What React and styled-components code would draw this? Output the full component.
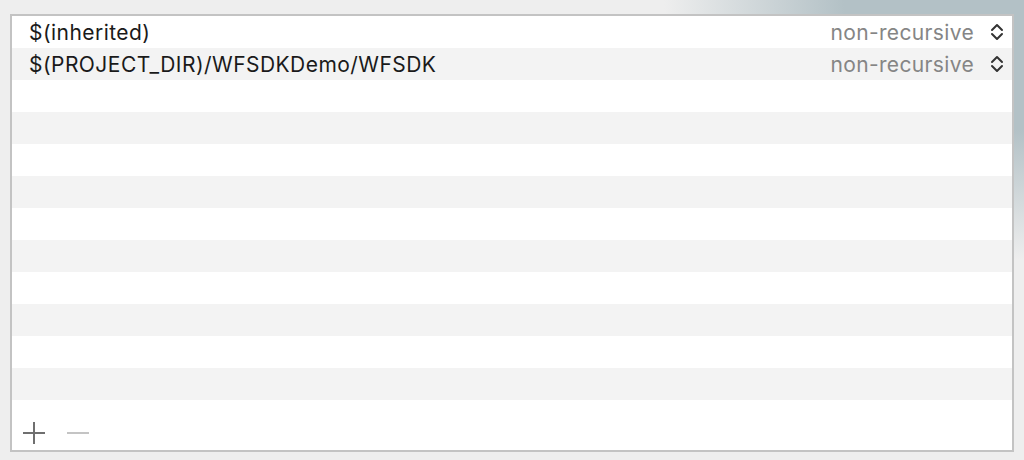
import React from 'react'
import styled, { createGlobalStyle } from 'styled-components'

const GlobalStyle = createGlobalStyle`
html, body {
  margin: 0;
  padding: 0;
}
body {
  width: 1024px;
  height: 460px;
  overflow: hidden;
  font-family: Inter, "Helvetica Neue", "Liberation Sans", sans-serif;
  background: radial-gradient(ellipse 360px 260px at 100% 0, #b3c1c6 50%, #eeeeee 100%);
  background-color: #eeeeee;
}
`

const paths = [
  { path: '$(inherited)', mode: 'non-recursive' },
  { path: '$(PROJECT_DIR)/WFSDKDemo/WFSDK', mode: 'non-recursive' },
]

function Chevrons() {
  return (
    <svg width="14" height="18" viewBox="0 0 14 18">
      <path d="M2 7 L7 2 L12 7" fill="none" stroke="#333" strokeWidth="2" strokeLinecap="round" strokeLinejoin="round" />
      <path d="M2 11 L7 16 L12 11" fill="none" stroke="#333" strokeWidth="2" strokeLinecap="round" strokeLinejoin="round" />
    </svg>
  )
}

function App() {
  const rows = []
  for (let i = 0; i < 12; i++) {
    const item = paths[i]
    rows.push(
      <Row key={i} odd={i % 2 === 1}>
        {item && (
          <>
            <PathText>{item.path}</PathText>
            <Mode>
              {item.mode}
              <Chevrons />
            </Mode>
          </>
        )}
      </Row>
    )
  }

  return (
    <>
      <GlobalStyle />
      <Page>
        <Table>
          <Rows>{rows}</Rows>
          <Footer>
            <IconButton aria-label="add">
              <svg width="22" height="22" viewBox="0 0 22 22">
                <rect x="0" y="10" width="22" height="2" fill="#6f6f6f" />
                <rect x="10" y="0" width="2" height="22" fill="#6f6f6f" />
              </svg>
            </IconButton>
            <IconButton aria-label="remove">
              <svg width="22" height="22" viewBox="0 0 22 22">
                <rect x="0" y="10" width="22" height="2" fill="#c4c4c4" />
              </svg>
            </IconButton>
          </Footer>
        </Table>
      </Page>
    </>
  )
}

export default App

const Page = styled.div`
padding: 14px 10px 0 10px;
`
const Table = styled.div`
width: 1000px;
height: 434px;
border: 2px solid #c3c3c3;
background: white;
display: flex;
flex-direction: column;
`
const Rows = styled.div`
display: flex;
flex-direction: column;
`
const Row = styled.div`
height: 32px;
display: flex;
align-items: center;
justify-content: space-between;
padding: 0 8px 0 17px;
background: ${props => props.odd ? '#f3f3f3' : '#ffffff'};
`
const PathText = styled.div`
font-size: 21px;
color: #1a1a1a;
letter-spacing: 0.45px;
`
const Mode = styled.div`
display: flex;
align-items: center;
gap: 16px;
font-size: 21px;
letter-spacing: 0.35px;
color: #858585;
`
const Footer = styled.div`
flex: 1;
display: flex;
align-items: center;
gap: 22px;
padding: 16px 0 0 11px;
`
const IconButton = styled.button`
border: none;
background: none;
padding: 0;
display: flex;
cursor: pointer;
`
